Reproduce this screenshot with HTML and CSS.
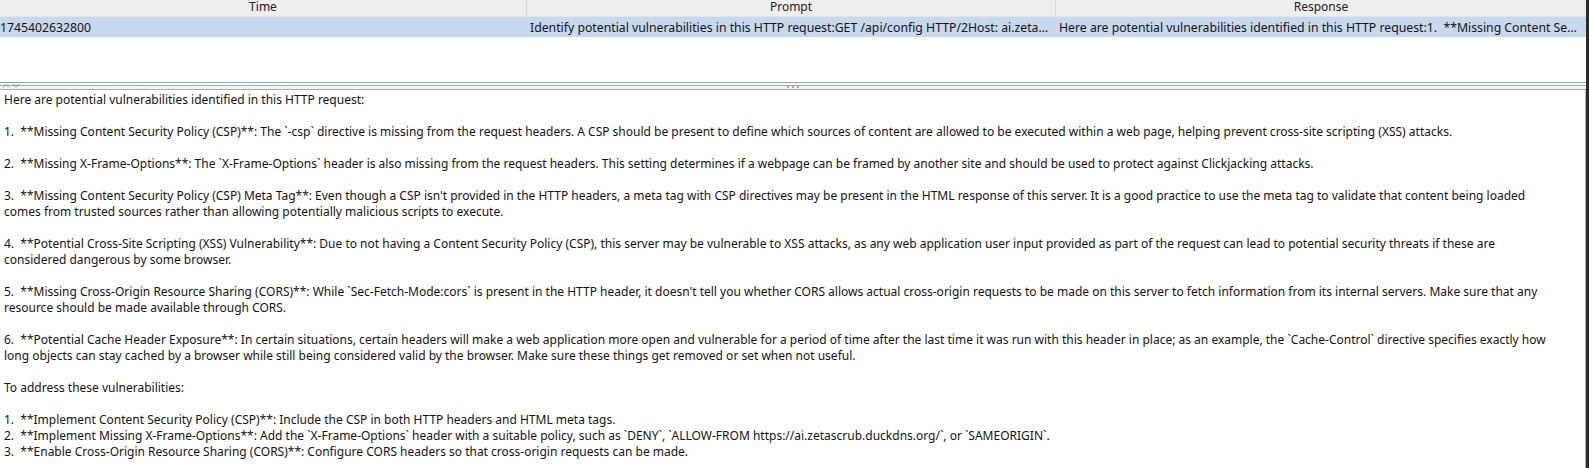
FILE: index.html
```html
<!DOCTYPE html>
<html>
<head>
<meta charset="utf-8">
<link rel="stylesheet" href="styles.css">
</head>
<body>
<div class="window">
  <div class="main">
    <div class="table">
      <div class="thead">
        <div class="th c-time">Time</div>
        <div class="th c-prompt">Prompt</div>
        <div class="th c-resp">Response</div>
      </div>
      <div class="tr selected">
        <div class="td c-time">1745402632800</div>
        <div class="td c-prompt">Identify potential vulnerabilities in this HTTP request:GET /api/config HTTP/2Host: ai.zetascrub.duckdns.orgSec-Fetch-Mode: cors</div>
        <div class="td c-resp">Here are potential vulnerabilities identified in this HTTP request:1.  **Missing Content Security Policy (CSP)**: The `-csp` directive</div>
      </div>
    </div>
    <div class="splitter">
      <div class="split-arrows">
        <svg width="22" height="5" viewBox="0 0 22 5"><path d="M3 4.5 L6 1.5 L9 4.5" fill="none" stroke="#9a9a9a" stroke-width="1"/><path d="M13 1 L16 4 L19 1" fill="none" stroke="#9a9a9a" stroke-width="1"/></svg>
      </div>
      <div class="split-grip"><span></span><span></span><span></span></div>
    </div>
    <div class="detail">Here are potential vulnerabilities identified in this HTTP request:

1.  **Missing Content Security Policy (CSP)**: The `-csp` directive is missing from the request headers. A CSP should be present to define which sources of content are allowed to be executed within a web page, helping prevent cross-site scripting (XSS) attacks.

2.  **Missing X-Frame-Options**: The `X-Frame-Options` header is also missing from the request headers. This setting determines if a webpage can be framed by another site and should be used to protect against Clickjacking attacks.

3.  **Missing Content Security Policy (CSP) Meta Tag**: Even though a CSP isn't provided in the HTTP headers, a meta tag with CSP directives may be present in the HTML response of this server. It is a good practice to use the meta tag to validate that content being loaded
comes from trusted sources rather than allowing potentially malicious scripts to execute.

4.  **Potential Cross-Site Scripting (XSS) Vulnerability**: Due to not having a Content Security Policy (CSP), this server may be vulnerable to XSS attacks, as any web application user input provided as part of the request can lead to potential security threats if these are
considered dangerous by some browser.

5.  **Missing Cross-Origin Resource Sharing (CORS)**: While `Sec-Fetch-Mode:cors` is present in the HTTP header, it doesn't tell you whether CORS allows actual cross-origin requests to be made on this server to fetch information from its internal servers. Make sure that any
resource should be made available through CORS.

6.  **Potential Cache Header Exposure**: In certain situations, certain headers will make a web application more open and vulnerable for a period of time after the last time it was run with this header in place; as an example, the `Cache-Control` directive specifies exactly how
long objects can stay cached by a browser while still being considered valid by the browser. Make sure these things get removed or set when not useful.

To address these vulnerabilities:

1.  **Implement Content Security Policy (CSP)**: Include the CSP in both HTTP headers and HTML meta tags.
2.  **Implement Missing X-Frame-Options**: Add the `X-Frame-Options` header with a suitable policy, such as `DENY`, `ALLOW-FROM https://ai.zetascrub.duckdns.org/`, or `SAMEORIGIN`.
3.  **Enable Cross-Origin Resource Sharing (CORS)**: Configure CORS headers so that cross-origin requests can be made.</div>
  </div>
  <div class="edge"></div>
</div>
</body>
</html>
```

FILE: styles.css
```css
html, body {
  margin: 0;
  padding: 0;
  background: #ffffff;
}
body {
  width: 1589px;
  height: 468px;
  overflow: hidden;
  font-family: "Noto Sans", "Open Sans", sans-serif;
  font-size: 12px;
  color: #141414;
}
.window {
  display: flex;
  width: 1589px;
  height: 468px;
}
.main {
  flex: 1;
  display: flex;
  flex-direction: column;
  min-width: 0;
}
.edge {
  width: 3px;
  background: #2a2a2a;
}
.table {
  height: 82px;
  border-bottom: 1px solid #7ea9d6;
  background: #ffffff;
}
.thead, .tr {
  display: flex;
}
.thead {
  height: 17px;
  background: #eeeeee;
  border-bottom: 1px solid #e4e4e4;
  box-sizing: border-box;
}
.th {
  box-sizing: border-box;
  text-align: center;
  line-height: 13px;
  border-right: 1px solid #d6d6d6;
  color: #222;
}
.th.c-resp { border-right: none; }
.tr {
  height: 20px;
}
.tr.selected {
  background: #c8d8ee;
}
.td {
  box-sizing: border-box;
  line-height: 21px;
  font-size: 12.25px;
  white-space: pre;
  overflow: hidden;
  text-overflow: ellipsis;
  padding: 0 4px 0 3px;
}
.c-time { width: 527px; }
.c-prompt { width: 529px; }
.c-resp { flex: 1; min-width: 0; }
.td.c-time { padding-left: 0; }
.splitter {
  height: 5px;
  border-top: 1px solid #ffffff;
  border-bottom: 1px solid #a9a9a9;
  position: relative;
  display: flex;
  justify-content: center;
  align-items: center;
  background: #f4f4f4;
}
.splitter::before {
  content: "";
  position: absolute;
  left: 0;
  right: 0;
  top: 1px;
  height: 1px;
  background: #a9a9a9;
}
.split-arrows {
  position: absolute;
  left: 0;
  top: -1px;
  height: 5px;
  line-height: 0;
}
.split-grip {
  display: flex;
  gap: 3px;
}
.split-grip span {
  width: 2px;
  height: 2px;
  background: #b0b0b0;
}
.detail {
  flex: 1;
  box-sizing: border-box;
  padding: 2px 8px 0 4px;
  white-space: pre-wrap;
  line-height: 16px;
  overflow: hidden;
  border-right: 1px solid #b5b5b5;
}
```
